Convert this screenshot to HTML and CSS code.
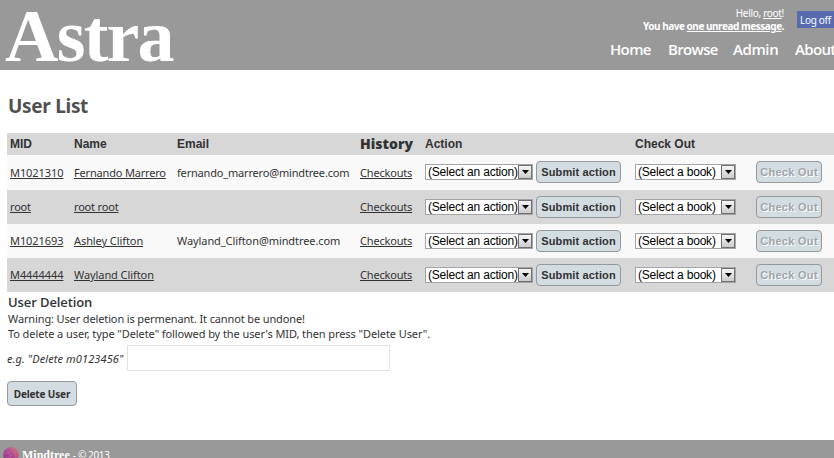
FILE: index.html
```html
<!DOCTYPE html>
<html lang="en">
<head>
<meta charset="utf-8">
<title>Astra - User List</title>
<link rel="stylesheet" href="styles.css">
</head>
<body>
<header class="header">
  <div class="brand">Astra</div>
  <div class="account">
    <div class="top">
      <div class="greeting">
        <div class="hello">Hello, <a>root</a>!</div>
        <div class="unread">You have <a>one unread message</a>.</div>
      </div>
      <a class="logoff">Log off</a>
    </div>
    <nav class="nav"><a class="home">Home</a><a class="browse">Browse</a><a class="admin">Admin</a><a>About</a></nav>
  </div>
</header>
<main class="main">
  <h1><span>User List</span></h1>
  <div class="table">
    <div class="row head"><span>MID</span><span>Name</span><span>Email</span><span class="history">History</span><span>Action</span><span>Check Out</span></div>
    <div class="row first">
      <span><a class="mid">M1021310</a></span><span><a>Fernando Marrero</a></span><span>fernando_marrero@mindtree.com</span><span><a>Checkouts</a></span>
      <div class="cell"><div class="select action">(Select an action)<i><svg viewBox="0 0 7 4"><path d="M0 0h7L3.5 4z"/></svg></i></div><button class="submit">Submit action</button></div>
      <div class="cell"><div class="select book">(Select a book)<i><svg viewBox="0 0 7 4"><path d="M0 0h7L3.5 4z"/></svg></i></div><button class="checkout" disabled>Check Out</button></div>
    </div>
    <div class="row dark">
      <span><a>root</a></span><span><a>root root</a></span><span></span><span><a>Checkouts</a></span>
      <div class="cell"><div class="select action">(Select an action)<i><svg viewBox="0 0 7 4"><path d="M0 0h7L3.5 4z"/></svg></i></div><button class="submit">Submit action</button></div>
      <div class="cell"><div class="select book">(Select a book)<i><svg viewBox="0 0 7 4"><path d="M0 0h7L3.5 4z"/></svg></i></div><button class="checkout" disabled>Check Out</button></div>
    </div>
    <div class="row">
      <span><a class="mid">M1021693</a></span><span><a class="wide">Ashley Clifton</a></span><span class="wide">Wayland_Clifton@mindtree.com</span><span><a>Checkouts</a></span>
      <div class="cell"><div class="select action">(Select an action)<i><svg viewBox="0 0 7 4"><path d="M0 0h7L3.5 4z"/></svg></i></div><button class="submit">Submit action</button></div>
      <div class="cell"><div class="select book">(Select a book)<i><svg viewBox="0 0 7 4"><path d="M0 0h7L3.5 4z"/></svg></i></div><button class="checkout" disabled>Check Out</button></div>
    </div>
    <div class="row dark">
      <span><a class="mid">M4444444</a></span><span><a class="wide">Wayland Clifton</a></span><span></span><span><a>Checkouts</a></span>
      <div class="cell"><div class="select action">(Select an action)<i><svg viewBox="0 0 7 4"><path d="M0 0h7L3.5 4z"/></svg></i></div><button class="submit">Submit action</button></div>
      <div class="cell"><div class="select book">(Select a book)<i><svg viewBox="0 0 7 4"><path d="M0 0h7L3.5 4z"/></svg></i></div><button class="checkout" disabled>Check Out</button></div>
    </div>
  </div>
  <h2>User Deletion</h2>
  <p>Warning: User deletion is permenant. It cannot be undone!</p>
  <p class="steps">To delete a user, type "Delete" followed by the user's MID, then press "Delete User".</p>
  <div class="entry"><em>e.g. "Delete m0123456"</em><input type="text"></div>
  <button class="delete">Delete User</button>
</main>
<footer class="footer">
  <svg class="globe" viewBox="0 0 16 16"><defs><linearGradient id="g" x1="0" y1="1" x2="1" y2="0"><stop offset="0" stop-color="#8a2f8c"/><stop offset=".5" stop-color="#b04592"/><stop offset="1" stop-color="#c98067"/></linearGradient></defs><circle cx="8" cy="8" r="7.8" fill="url(#g)"/><path d="M1 7Q7 7 11 1M2 11Q10 9 14 3M4 3Q8 7 8 15M8 1Q13 5 13 13" fill="none" stroke="#d48bc0" stroke-width=".4" opacity=".6"/></svg>
  <span class="company">Mindtree</span><span class="year">- © 2013</span>
</footer>
</body>
</html>
```

FILE: styles.css
```css
* { box-sizing: border-box; }
body { margin: 0; width: 834px; height: 458px; overflow: hidden; background: #fff; color: #333; font: 11px/15px "Noto Sans", "Open Sans", sans-serif; }
.header { height: 70px; background: #999; color: #fff; display: flex; justify-content: space-between; }
.brand { font: bold 74px/72px "Liberation Serif", serif; letter-spacing: -1.8px; padding-left: 5px; }
.account { width: 224px; flex: none; }
.top { display: flex; height: 37px; justify-content: flex-end; padding-top: 7px; font-size: 10px; line-height: 13px; white-space: nowrap; }
.greeting { text-align: right; margin-right: 13px; }
.unread { font-weight: bold; letter-spacing: -.47px; }
.hello { letter-spacing: -.3px; }
a { text-decoration: underline; text-underline-offset: 1px; }
.logoff { width: 37px; height: 17px; margin-top: 4px; padding-left: 3px; background: #566caf; line-height: 19px; text-decoration: none; letter-spacing: -.3px; }
.nav { display: flex; font: 600 15px/24px "Open Sans", sans-serif; letter-spacing: -.65px; white-space: nowrap; }
.nav a { text-decoration: none; flex: none; }
.home { width: 58px; }
.browse { width: 65px; }
.admin { width: 62px; letter-spacing: -.4px; }
.main { padding-left: 7px; height: 370px; }
h1 { margin: 0; padding: 23px 0 0 1px; height: 63px; font-size: 19px; line-height: 26px; color: #505050; letter-spacing: -.3px; }
.row { display: grid; grid-template-columns: 64px 103px 183px 65px 210px 1fr; height: 34px; padding-left: 3px; align-items: center; background: #f9f9f9; white-space: nowrap; letter-spacing: -.18px; }
.row.first { height: 35px; }
.row.dark { background: #d7d7d7; }
.row.head { height: 22px; background: #d7d7d7; font: bold 12px/22px "Liberation Sans", sans-serif; letter-spacing: 0; }
.head .history { font: 800 14px/22px "Open Sans", sans-serif; }
.mid, .wide { letter-spacing: -.08px; }
.row > span { padding-bottom: 1px; }
.row.head > span, .row.first > span { padding-bottom: 0; }
.cell { display: flex; align-items: center; padding-bottom: 1px; }
.select { height: 16px; border: 1px solid #a3a3a9; background: #fff; color: #000; font: 12px/14px "Liberation Sans", sans-serif; padding-left: 2px; display: flex; justify-content: space-between; letter-spacing: -.2px; }
.select i { width: 14px; height: 14px; flex: none; border: 1px solid #707070; background: linear-gradient(#f5f5f5, #ccc); display: flex; align-items: center; justify-content: center; }
.select svg { width: 7px; height: 4px; }
.action { width: 108px; margin-right: 3px; }
.book { width: 101px; margin-right: 20px; }
button { border: 1px solid #96989c; border-radius: 4px; background: #d2dce1; color: #333; font: bold 11px/18px "Liberation Sans", sans-serif; padding: 0; height: 22px; white-space: nowrap; }
.submit { width: 85px; letter-spacing: .15px; }
.checkout { width: 66px; color: #a0a5a8; text-shadow: 1px 1px #fff; letter-spacing: .3px; }
h2 { margin: 2px 0 0 1px; font: 600 13px/17px "Open Sans", sans-serif; letter-spacing: -.1px; }
p { margin: 0 0 0 1px; letter-spacing: -.13px; }
.steps { letter-spacing: -.08px; }
.entry { display: flex; align-items: center; margin-top: 4px; height: 26px; gap: 3px; }
.entry em { width: 117px; white-space: nowrap; letter-spacing: .1px; }
.entry input { width: 263px; height: 26px; border: 1px solid #e2e2e2; padding: 0; }
.delete { width: 70px; height: 25px; margin-top: 10px; font: bold 10px/20px "Noto Sans", sans-serif; letter-spacing: -.15px; }
.footer { height: 18px; background: #999; color: #fff; padding: 7px 0 0 3px; display: flex; align-items: flex-start; font-size: 10px; line-height: 17px; }
.globe { width: 16px; height: 16px; flex: none; margin-right: 3px; }
.company { font: bold 12px/17px "Liberation Serif", serif; margin-right: 3px; }
.year { letter-spacing: -.35px; }
```
